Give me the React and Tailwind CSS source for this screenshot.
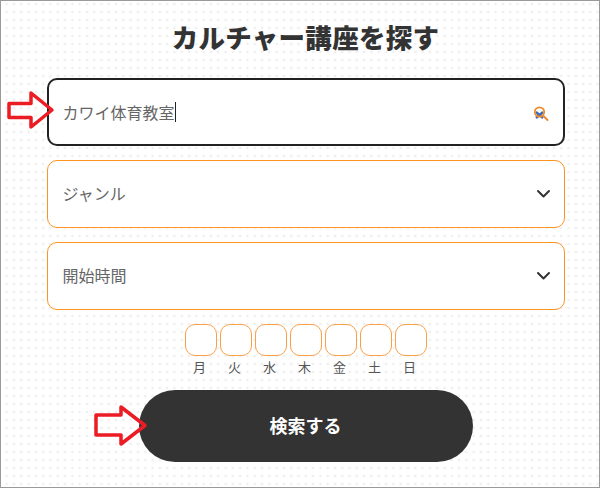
import React from "react";

const Chevron = () => (
  <svg width="15" height="10" viewBox="0 0 15 10" fill="none" stroke="#333" strokeWidth="2" strokeLinecap="round" strokeLinejoin="round" className="absolute right-[13px] top-1/2 -translate-y-1/2">
    <path d="M2 2l5.500 5.500L13 2" />
  </svg>
);

const days = ["月", "火", "水", "木", "金", "土", "日"];

export default function App() {
  return (
    <div className="relative w-[600px] h-[488px] border border-[#9a9a9a] bg-white bg-[radial-gradient(circle,#f0f0f0_1px,transparent_1.8px)] bg-[length:7.3px_8px] bg-[position:2px_-1px] overflow-hidden text-[#333] font-['Noto_Sans_CJK_JP','Noto_Sans',sans-serif]">
      <div className="flex flex-col items-center pt-[16px] pl-[11px]">
        <h1 className="h-[40px] leading-[40px] text-[26.500px] font-black tracking-[0.3px]">カルチャー講座を探す</h1>
        <div className="mt-[21px] flex w-[518px] flex-col gap-[14px]">
          <div className="relative flex h-[68px] items-center rounded-[10px] border-2 border-[#222] bg-white pl-[14px] pb-[1px] text-[16px] text-[#666]">
            カワイ体育教室<span className="h-[20px] w-px bg-[#222]" />
            <svg width="17" height="17" viewBox="0 0 17 17" className="absolute right-[14px] top-[25px]" fill="none">
              <path d="M4 7l7 6M11 7l-7 6" stroke="#3f6cb5" strokeWidth="2.400" />
              <circle cx="7.500" cy="7" r="4.700" stroke="#ef8a2c" strokeWidth="1.800" />
              <path d="M11 10.500l4.500 4.500" stroke="#ef8a2c" strokeWidth="2" strokeLinecap="round" />
            </svg>
          </div>
          <div className="relative flex h-[68px] items-center rounded-[10px] border border-[#ff9422] bg-white pl-[15px] pb-[2px] text-[16px] text-[#666]">
            ジャンル
            <Chevron />
          </div>
          <div className="relative flex h-[68px] items-center rounded-[10px] border border-[#ff9422] bg-white pl-[15px] pb-[2px] text-[16px] text-[#666]">
            開始時間
            <Chevron />
          </div>
        </div>
        <div className="mt-[14px] flex gap-[3px]">
          {days.map((d) => (
            <div key={d} className="flex w-[32px] flex-col items-center">
              <div className="h-[32px] w-[32px] rounded-[10px] border-[1.500px] border-[#f9a14a] bg-white" />
              <span className="mt-[1px] h-[20px] pr-[2px] text-[13px] leading-[20px] text-[#555]">{d}</span>
            </div>
          ))}
        </div>
        <button className="mt-[13px] h-[72px] w-[334px] rounded-[36px] bg-[#333] pb-[2px] text-[18px] font-bold text-white">
          検索する
        </button>
      </div>
      <svg width="52" height="48" viewBox="0 0 52 48" fill="none" stroke="#ec1c24" strokeWidth="3.500" strokeLinejoin="round" className="absolute left-[4px] top-[85px]">
        <path d="M4 17.500H26V7L47 24 26 41V31.500H4z" />
      </svg>
      <svg width="58" height="52" viewBox="0 0 58 52" fill="none" stroke="#ec1c24" strokeWidth="3.500" strokeLinejoin="round" className="absolute left-[91px] top-[399px]">
        <path d="M4 15H29V7L53 25.500 29 44V35H4z" />
      </svg>
    </div>
  );
}
